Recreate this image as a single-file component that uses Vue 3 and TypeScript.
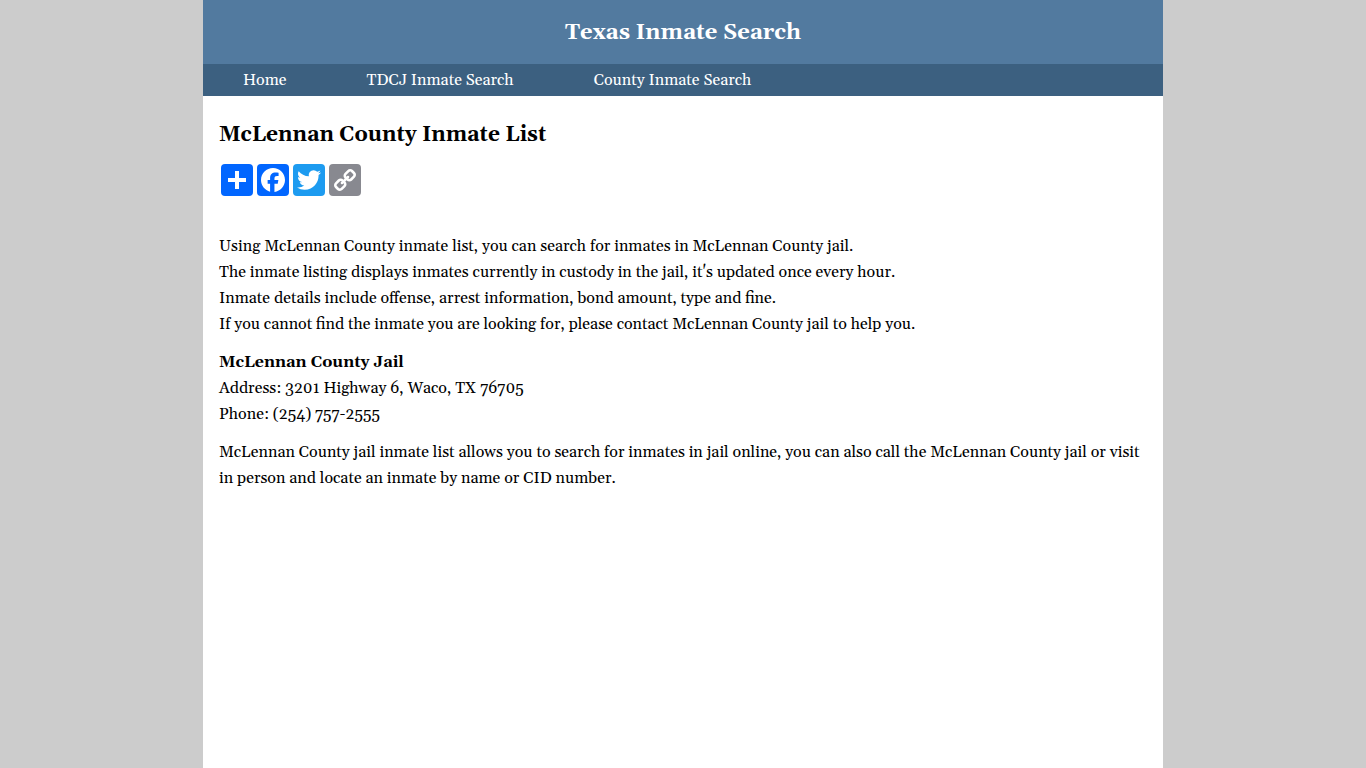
<script setup lang="ts">
interface NavLink {
  label: string
  href: string
}

const links: NavLink[] = [
  { label: 'Home', href: '#home' },
  { label: 'TDCJ Inmate Search', href: '#tdcj' },
  { label: 'County Inmate Search', href: '#county' },
]
</script>

<template>
  <div class="page">
    <header class="banner">Texas Inmate Search</header>
    <nav class="nav" aria-label="Main">
      <a v-for="link in links" :key="link.href" :href="link.href">{{ link.label }}</a>
    </nav>
    <main class="content">
      <h1>McLennan County Inmate List</h1>
      <div class="share">
        <a class="blue" href="#share" aria-label="Share">
          <svg viewBox="0 0 32 32"><path fill="#fff" d="M14 7h4v18h-4z" /><path fill="#fff" d="M7 14h18v4H7z" /></svg>
        </a>
        <a class="blue" href="#facebook" aria-label="Facebook">
          <svg viewBox="0 0 32 32"><path fill="#fff" d="M28 16c0-6.627-5.373-12-12-12S4 9.373 4 16c0 5.628 3.875 10.35 9.101 11.647v-7.98h-2.474V16H13.1v-1.58c0-4.085 1.849-5.978 5.859-5.978.76 0 2.072.15 2.608.298v3.325c-.283-.03-.775-.045-1.386-.045-1.967 0-2.728.745-2.728 2.683V16h3.92l-.673 3.667h-3.247v8.245C23.395 27.195 28 22.135 28 16" /></svg>
        </a>
        <a class="sky" href="#twitter" aria-label="Twitter">
          <svg viewBox="0 0 32 32"><path fill="#fff" d="M28 8.557a10 10 0 0 1-2.828.775 4.930 4.930 0 0 0 2.166-2.725 9.700 9.700 0 0 1-3.130 1.194 4.920 4.920 0 0 0-3.593-1.550 4.924 4.924 0 0 0-4.794 6.049c-4.090-.210-7.720-2.170-10.150-5.150a4.940 4.940 0 0 0-.665 2.477c0 1.710.870 3.214 2.190 4.100a5 5 0 0 1-2.230-.616v.060c0 2.390 1.700 4.380 3.952 4.830-.414.115-.850.174-1.297.174q-.476-.001-.928-.090a4.935 4.935 0 0 0 4.600 3.420 9.900 9.900 0 0 1-6.114 2.107q-.597 0-1.175-.067a13.950 13.950 0 0 0 7.550 2.213c9.056 0 14.010-7.507 14.010-14.013q0-.320-.015-.637c.960-.695 1.795-1.560 2.455-2.550z" /></svg>
        </a>
        <a class="gray" href="#copy" aria-label="Copy link">
          <svg viewBox="0 0 32 32"><path fill="#fff" transform="translate(32) scale(-1 1)" d="M24.412 21.177c0-.36-.126-.665-.377-.917l-2.804-2.804a1.235 1.235 0 0 0-.913-.378c-.377 0-.7.144-.97.43.026.028.11.11.255.25.144.14.24.236.29.29s.117.14.2.256c.087.117.146.232.177.344.03.112.046.236.046.37 0 .36-.126.666-.377.918a1.25 1.25 0 0 1-.918.377 1.400 1.400 0 0 1-.373-.047 1.060 1.060 0 0 1-.345-.175 2 2 0 0 1-.256-.2 7 7 0 0 1-.29-.290c-.140-.142-.223-.230-.250-.254-.297.280-.445.607-.445.984 0 .360.126.664.377.916l2.778 2.790c.243.243.548.364.917.364.360 0 .665-.118.917-.350l1.982-1.970c.252-.250.378-.550.378-.900zm-9.477-9.504c0-.360-.126-.665-.377-.917l-2.777-2.790a1.235 1.235 0 0 0-.913-.378c-.350 0-.656.120-.917.364L7.967 9.920c-.254.252-.380.553-.380.903 0 .360.126.665.380.917l2.802 2.804c.242.243.547.364.916.364.377 0 .700-.140.970-.418-.026-.027-.110-.110-.255-.250s-.240-.235-.290-.290a3 3 0 0 1-.200-.255 1.040 1.040 0 0 1-.177-.344 1.400 1.400 0 0 1-.046-.370c0-.360.126-.666.377-.918a1.250 1.250 0 0 1 .918-.377c.135 0 .260.015.373.046s.230.090.345.175.202.150.256.200c.054.050.150.148.290.290s.223.230.250.254c.297-.280.445-.607.445-.984zM27 21.177c0 1.078-.382 1.990-1.146 2.736l-1.982 1.968c-.745.750-1.658 1.120-2.736 1.120-1.087 0-2.004-.380-2.750-1.143l-2.777-2.790c-.750-.747-1.120-1.660-1.120-2.737 0-1.106.392-2.046 1.183-2.818l-1.186-1.185c-.774.790-1.708 1.186-2.805 1.186-1.078 0-1.995-.376-2.750-1.130l-2.803-2.810C5.377 12.820 5 11.903 5 10.826c0-1.080.382-1.993 1.146-2.738L8.128 6.120C8.873 5.372 9.785 5 10.864 5c1.087 0 2.004.382 2.750 1.146l2.777 2.790c.750.747 1.120 1.660 1.120 2.737 0 1.105-.392 2.045-1.183 2.817l1.186 1.186c.774-.790 1.708-1.186 2.805-1.186 1.078 0 1.995.377 2.750 1.132l2.804 2.804c.754.755 1.130 1.672 1.130 2.750z" /></svg>
        </a>
      </div>
      <p>
        Using McLennan County inmate list, you can search for inmates in McLennan County jail.<br />
        The inmate listing displays inmates currently in custody in the jail, it's updated once every hour.<br />
        Inmate details include offense, arrest information, bond amount, type and fine.<br />
        If you cannot find the inmate you are looking for, please contact McLennan County jail to help you.
      </p>
      <p>
        <strong>McLennan County Jail</strong><br />
        Address: 3201 Highway 6, Waco, TX 76705<br />
        Phone: (254) 757-2555
      </p>
      <p>
        McLennan County jail inmate list allows you to search for inmates in jail online, you can also call the McLennan County jail or visit in person and locate an inmate by name or CID number.
      </p>
    </main>
  </div>
</template>

<style>
body {
  margin: 0;
  background: #ccc;
}
</style>

<style scoped>
.page {
  max-width: 960px;
  min-height: 100vh;
  margin: 0 auto;
  background: #fff;
  color: #000;
  font-family: Georgia, Gelasio, "Liberation Serif", serif;
  font-size: 16px;
}
.banner {
  padding: 17px 16px 15px;
  background: #527a9f;
  color: #fff;
  font-size: 22px;
  font-weight: bold;
  line-height: 32px;
  text-align: center;
}
.nav {
  display: flex;
  flex-wrap: wrap;
  background: #3c6080;
}
.nav a {
  padding: 0 40px;
  color: #fff;
  line-height: 32px;
  text-decoration: none;
}
.content {
  padding: 23px 16px;
}
h1 {
  margin: 0 0 13px;
  font-size: 21px;
  line-height: 32px;
}
.share {
  display: flex;
  gap: 4px;
  margin: 0 2px 37px;
}
.share a {
  width: 32px;
  height: 32px;
  border-radius: 4px;
}
.share svg {
  display: block;
  width: 32px;
  height: 32px;
}
.blue {
  background: #0166ff;
}
.sky {
  background: #1d9bf0;
}
.gray {
  background: #888990;
}
p {
  margin: 0 0 12px;
  line-height: 26px;
}
</style>
